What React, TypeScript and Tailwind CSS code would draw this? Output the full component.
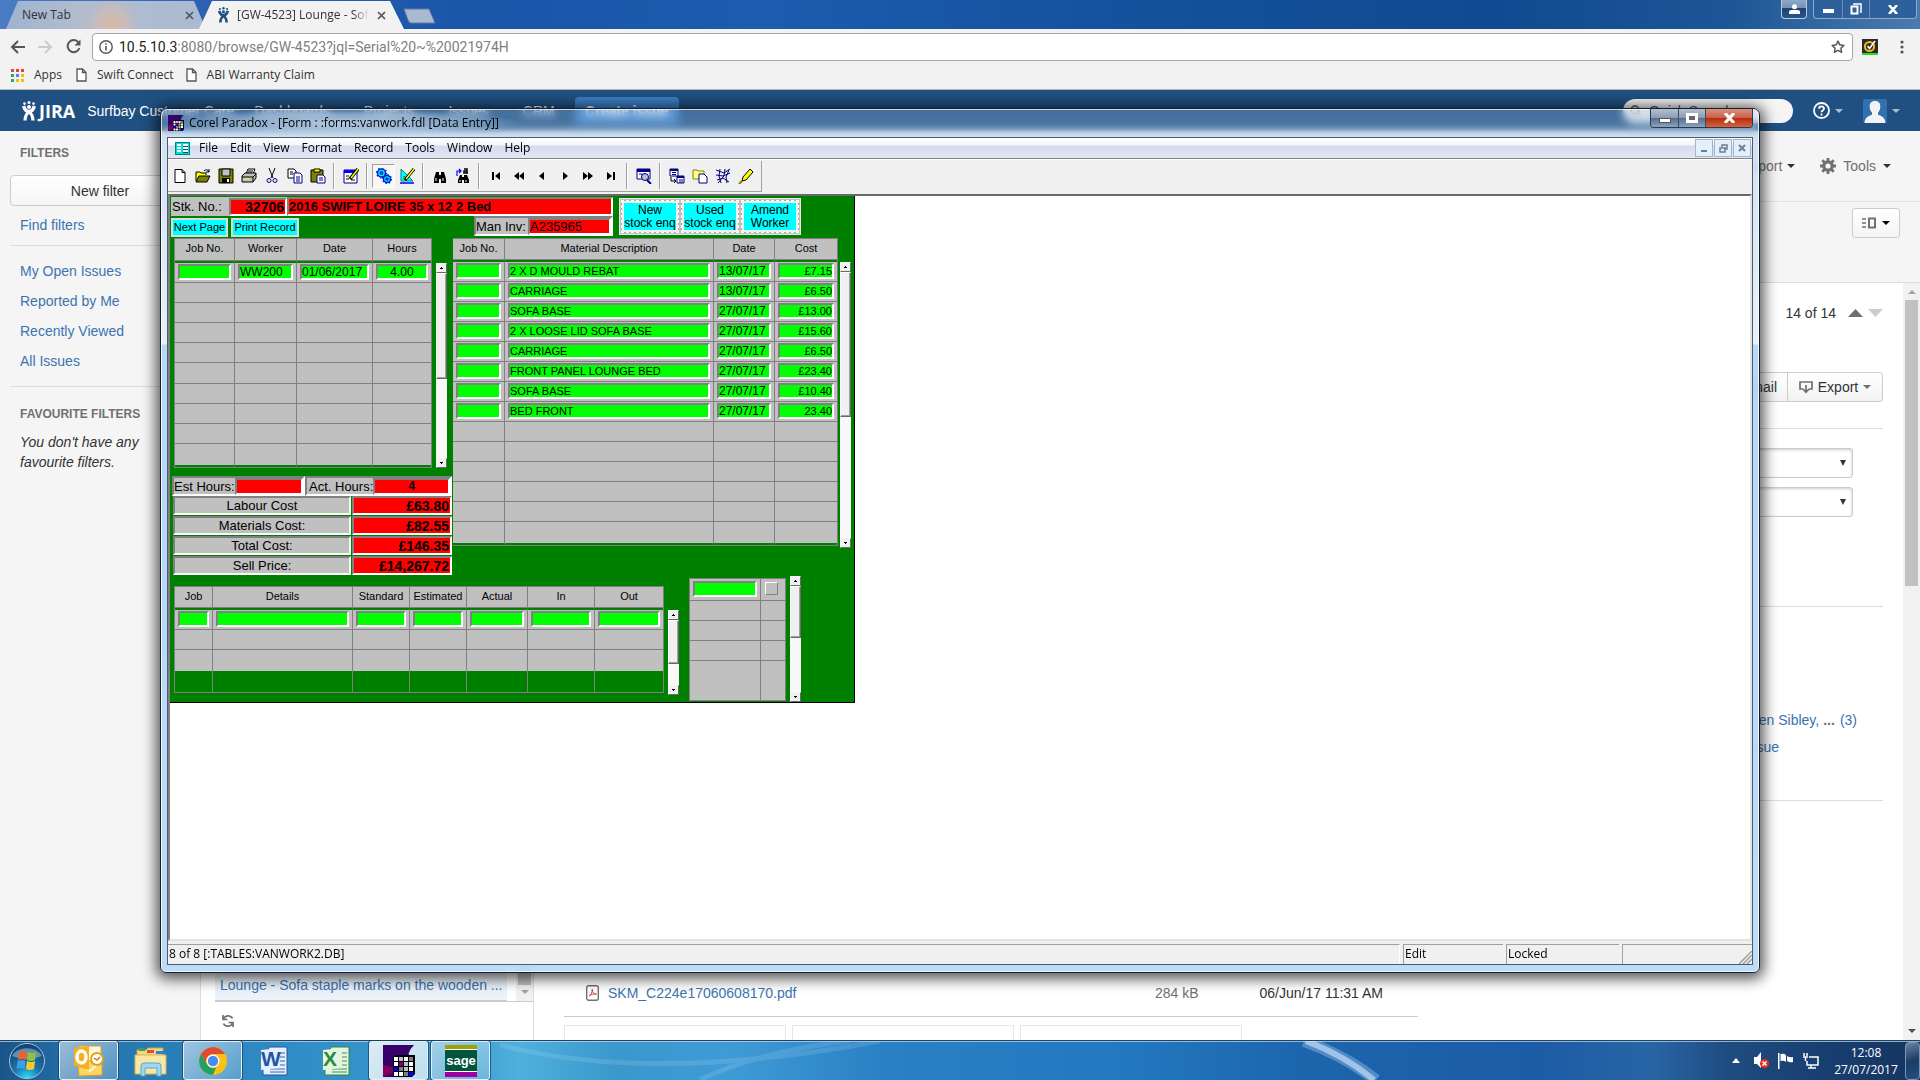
import React from "react";
import { FiStar } from "react-icons/fi";

const SUNK = "border-2 border-t-[#808080] border-l-[#808080] border-r-white border-b-white";
const FIELD =
  "block h-4 w-full min-w-0 rounded-none border-2 border-t-[#808080] border-l-[#808080] border-r-white border-b-white bg-[#00ff00] p-0 text-black outline-none";

function Caret({ className = "text-black" }: { className?: string }) {
  return (
    <svg width="8" height="4" viewBox="0 0 8 4" className={className}>
      <path d="M0 0h8L4 4z" fill="currentColor" />
    </svg>
  );
}

/* ---------- Chrome ---------- */

function JiraMark({ className }: { className: string }) {
  return (
    <svg viewBox="0 0 14 20" className={className} fill="currentColor">
      <circle cx="2.5" cy="2.6" r="1.3" />
      <circle cx="7" cy="1.6" r="1.5" />
      <circle cx="11.5" cy="2.6" r="1.3" />
      <path d="M0 5.4l3.3-.9c.8 3 2 4.200 3.700 4.200s2.900-1.200 3.700-4.200l3.300.9c-.8 3-2.200 5-4.200 6.200 1.600 1.800 2.600 4.400 2.800 7.900H9.300c0-3.200-.8-5.200-2.300-6.500-1.500 1.300-2.300 3.300-2.300 6.500H1.400c.2-3.500 1.200-6.100 2.800-7.900C2.200 10.400.8 8.400 0 5.400z" />
      <circle cx="7" cy="6" r="2" />
    </svg>
  );
}

function CloseX() {
  return (
    <svg width="9" height="9" viewBox="0 0 9 9" stroke="#555" strokeWidth="1.700">
      <path d="M1 1l7 7M8 1L1 8" />
    </svg>
  );
}

function PageIcon() {
  return (
    <svg width="11" height="14" viewBox="0 0 11 14" fill="#fff" stroke="#555" strokeWidth="1.300">
      <path d="M1 1h5.500L10 4.500V13H1z" />
      <path d="M6.500 1v3.500H10" fill="none" />
    </svg>
  );
}

function TabStrip() {
  return (
    <div className="flex h-[29px] shrink-0 items-end bg-[linear-gradient(90deg,#4a7cc4_0,#2f62b0_10%,#1a55a8_25%,#1c5cae_40%,#14509c_60%,#104a90_78%,#1c5696_90%,#4a7bae_100%)]">
      <div className="ml-[6px] flex h-7 w-[200px] items-center justify-between bg-[radial-gradient(circle_at_106px_24px,#d9b9a4_0,#c9bcbb_14px,transparent_26px),linear-gradient(90deg,#9fb4d0,#b3bccd_40%,#a9bad3)] pr-3 pl-4 text-xs text-[#333] [clip-path:polygon(0_100%,12px_0,188px_0,100%_100%)]">
        <span>New Tab</span>
        <button aria-label="Close New Tab"><CloseX /></button>
      </div>
      <div className="-ml-[7px] flex h-7 w-[205px] items-center bg-[#f2f2f2] pr-[18px] pl-[18px] text-xs text-[#333] [clip-path:polygon(0_100%,13px_0,191px_0,100%_100%)]">
        <JiraMark className="h-4 w-[13px] shrink-0 text-[#205081]" />
        <span className="ml-[7px] min-w-0 flex-1 overflow-hidden whitespace-nowrap [mask-image:linear-gradient(90deg,#000_88%,transparent)]">
          [GW-4523] Lounge - Sofa
        </span>
        <button aria-label="Close tab" className="ml-2"><CloseX /></button>
      </div>
      <button aria-label="New tab" className="mb-[5px] -ml-px">
        <svg width="33" height="16" viewBox="0 0 33 16">
          <path d="M1 1h25l6 14H8q-2 0-3-3z" fill="#a9b9d0" stroke="#5d7ba6" />
        </svg>
      </button>
      <div className="mr-[3px] ml-auto flex gap-[6px] self-start">
        <button aria-label="Profile" className="flex h-[19px] w-[26px] items-center justify-center rounded-b border border-t-0 border-[#b9cbe0] bg-[linear-gradient(#8fa9c8_0,#7591b4_45%,#1c4474_46%,#2c5587)]">
          <svg width="11" height="10" viewBox="0 0 11 10" fill="#fff"><circle cx="5.500" cy="2.700" r="2.500" /><path d="M0 10V8q0-2 3-2h5q3 0 3 2v2z" /></svg>
        </button>
        <div className="flex h-[19px] overflow-hidden rounded-b border border-t-0 border-[#8fa9c8] bg-[#2e609b] text-white">
          <button aria-label="Minimize" className="flex w-[29px] items-center justify-center border-r border-[#6d8fb8]"><span className="mt-1 h-1 w-[11px] bg-white" /></button>
          <button aria-label="Restore" className="flex w-[27px] items-center justify-center border-r border-[#6d8fb8]">
            <svg width="12" height="12" viewBox="0 0 12 12" fill="none" stroke="#fff" strokeWidth="2"><path d="M4 2V1h7v8h-1" strokeWidth="1.500" /><path d="M1.500 3.500h6v7h-6z" /></svg>
          </button>
          <button aria-label="Close" className="flex w-[46px] items-center justify-center">
            <svg width="10" height="9" viewBox="0 0 10 9" stroke="#fff" strokeWidth="2.600"><path d="M1 0l8 9M9 0L1 9" /></svg>
          </button>
        </div>
      </div>
    </div>
  );
}

function AddressRow() {
  return (
    <div className="flex h-[35px] shrink-0 items-center bg-[#f2f2f2] pr-[16px] pl-[10px]">
      <button aria-label="Back" className="w-[16px] text-[#555]">
        <svg width="15" height="14" viewBox="0 0 15 14" fill="none" stroke="currentColor" strokeWidth="2"><path d="M15 7H2M8 1L2 7l6 6" /></svg>
      </button>
      <button aria-label="Forward" className="ml-3 w-[16px] text-[#ccc]">
        <svg width="15" height="14" viewBox="0 0 15 14" fill="none" stroke="currentColor" strokeWidth="2"><path d="M0 7h13M7 1l6 6-6 6" /></svg>
      </button>
      <button aria-label="Reload" className="ml-3 w-[16px] text-[#555]">
        <svg width="15" height="15" viewBox="0 0 15 15" fill="none" stroke="currentColor" strokeWidth="2"><path d="M12.500 3.500A6 6 0 1 0 13.400 9" /><path d="M14.500.5v6h-6z" fill="currentColor" stroke="none" /></svg>
      </button>
      <div className="ml-[10px] flex h-7 flex-1 items-center rounded-sm border border-[#a6a6a6] bg-white pr-[7px] pl-[6px]">
        <svg width="14" height="14" viewBox="0 0 14 14" fill="none" stroke="#555" strokeWidth="1.400"><circle cx="7" cy="7" r="6.200" /><path d="M7 6v4.500M7 3.200v1.600" strokeWidth="1.600" /></svg>
        <span className="ml-[6px] flex-1 font-[Roboto,sans-serif] text-sm leading-none whitespace-nowrap text-[#808080]">
          <span className="text-[#222]">10.5.10.3</span>:8080/browse/GW-4523?jql=Serial%20~%20021974H
        </span>
        <button aria-label="Bookmark this page"><FiStar size={14} color="#555" strokeWidth={2.500} /></button>
      </div>
      <svg className="ml-[9px]" width="16" height="16" viewBox="0 0 16 16"><path fill="#2b2b2b" d="M0 0h16v16H0z" /><path fill="#2bdc12" d="M0 14h16v2H0z" /><circle cx="7.500" cy="7.500" r="4.600" fill="none" stroke="#f4b81c" strokeWidth="2" /><path d="M5.500 7l2 2.500L13 2" fill="none" stroke="#fff" strokeWidth="1.600" /></svg>
      <button aria-label="Menu" className="ml-[22px]">
        <svg width="4" height="14" viewBox="0 0 4 14" fill="#555"><circle cx="2" cy="2" r="1.600" /><circle cx="2" cy="7" r="1.600" /><circle cx="2" cy="12" r="1.600" /></svg>
      </button>
    </div>
  );
}

const APP_DOTS = ["#ea4335", "#ea4335", "#ea4335", "#34a853", "#4285f4", "#fbbc05", "#34a853", "#fbbc05", "#fbbc05"];

function BookmarksBar() {
  return (
    <div className="flex h-[26px] shrink-0 items-center border-b border-[#b5b5b5] bg-[#f2f2f2] pb-[3px] pl-[11px] text-xs text-[#333]">
      <a href="#apps" className="flex items-center gap-[10px]">
        <span className="grid grid-cols-3 gap-[2px]">
          {APP_DOTS.map((c, i) => <i key={i} className="h-[3px] w-[3px]" style={{ background: c }} />)}
        </span>
        Apps
      </a>
      <a href="#swift" className="ml-[14px] flex items-center gap-[10px]"><PageIcon />Swift Connect</a>
      <a href="#abi" className="ml-[12px] flex items-center gap-[10px]"><PageIcon />ABI Warranty Claim</a>
    </div>
  );
}

/* ---------- JIRA ---------- */

function JiraHeader() {
  return (
    <header className="flex h-[41px] shrink-0 items-center bg-[#205081] pr-5 pl-[22px] font-[Liberation_Sans,sans-serif] text-sm text-white">
      <a href="#jira" className="flex items-center gap-[3px]">
        <JiraMark className="h-5 w-[14px]" />
        <span className="font-[Open_Sans,sans-serif] text-lg leading-none font-bold">JIRA</span>
      </a>
      <a href="#home" className="ml-3 whitespace-nowrap">Surfbay Customer Care</a>
      <nav className="ml-[20px] flex items-center gap-[34px]">
        <a href="#dash">Dashboards</a>
        <a href="#projects">Projects</a>
        <a href="#issues">Issues</a>
        <a href="#crm">CRM</a>
      </nav>
      <button className="ml-[20px] h-7 w-[104px] rounded-sm bg-[#3b7fc4] font-bold whitespace-nowrap">Create issue</button>
      <div className="ml-auto flex h-6 w-[170px] items-center rounded-full bg-[#f5f5f5] pl-[7px] text-[#555]">
        <svg width="12" height="12" viewBox="0 0 12 12" fill="none" stroke="#555" strokeWidth="1.500"><circle cx="5" cy="5" r="4" /><path d="M8 8l4 4" /></svg>
        <input aria-label="Quick Search" placeholder="Quick Search" className="ml-[7px] w-[120px] bg-transparent placeholder:text-[#555]" />
      </div>
      <button aria-label="Help" className="ml-5 flex items-center gap-[5px]">
        <svg width="17" height="17" viewBox="0 0 17 17"><circle cx="8.500" cy="8.500" r="7.500" fill="none" stroke="#fff" strokeWidth="1.800" /><path d="M6 6.800C6 3.600 11 3.700 11 6.600c0 1.900-2.500 1.800-2.500 3.700M8.500 11.600v1.800" fill="none" stroke="#fff" strokeWidth="1.800" /></svg>
        <Caret className="text-[#a9bdd3]" />
      </button>
      <button aria-label="User profile" className="ml-5 flex items-center gap-[5px]">
        <svg width="24" height="24" viewBox="0 0 24 24"><rect width="24" height="24" rx="2" fill="#3270b0" /><path d="M12 2c4 0 5.500 2.500 5.300 6-.2 3-1.300 4.500-2.300 5.500v2c2 1.500 7 1.500 7.500 8.500h-21C2 17 7 17 9 15.500v-2C8 12.500 6.900 11 6.700 8 6.500 4.500 8 2 12 2z" fill="#f3f3f3" /></svg>
        <Caret className="text-[#a9bdd3]" />
      </button>
    </header>
  );
}

function Sidebar() {
  return (
    <aside className="w-[200px] shrink-0 bg-[#f5f5f5] px-[10px] text-sm leading-5 text-[#3b73af]">
      <h2 className="mt-[12px] pl-[10px] text-xs leading-5 font-bold text-[#707070]">FILTERS</h2>
      <button className="mt-[12px] h-[31px] w-full rounded-sm border border-[#ccc] bg-[linear-gradient(#fff,#f5f5f5)] text-[#333]">New filter</button>
      <a href="#find" className="mt-[9px] ml-[10px] block">Find filters</a>
      <hr className="mt-[10px] border-[#ddd]" />
      <ul className="mt-[15px] ml-[10px] flex flex-col gap-[10px]">
        {["My Open Issues", "Reported by Me", "Recently Viewed", "All Issues"].map((t) => (
          <li key={t}><a href="#list">{t}</a></li>
        ))}
      </ul>
      <hr className="mt-[15px] border-[#ddd]" />
      <h2 className="mt-[17px] pl-[10px] text-xs leading-5 font-bold text-[#707070]">FAVOURITE FILTERS</h2>
      <p className="mt-[8px] w-[150px] pl-[10px] text-[#333] italic">You don't have any favourite filters.</p>
    </aside>
  );
}

function IssueList() {
  return (
    <section className="flex w-[334px] shrink-0 flex-col justify-end border-x border-[#ddd] pl-[14px]">
      <div className="flex items-end border-b border-[#ccc]">
        <a href="#issue" className="mr-[9px] h-12 flex-1 border-b border-[#ccc] bg-[#ebf2f9] pt-[22px] pl-[5px] text-sm leading-5 whitespace-nowrap text-[#3b73af]">
          Lounge - Sofa staple marks on the wooden ...
        </a>
        <div className="flex h-12 w-[17px] flex-col items-center bg-[#f1f1f1]">
          <div className="h-[32px] w-[13px] bg-[#c1c1c1]" />
          <Caret className="mt-[5px] text-[#a3a3a3]" />
        </div>
      </div>
      <button aria-label="Refresh" className="mt-[12px] mb-[12px] ml-[7px] w-3 text-[#707070]">
        <svg width="12" height="14" viewBox="0 0 12 14" fill="none" stroke="currentColor" strokeWidth="1.700"><path d="M1 1v4.500h4.500M1.500 5Q3 1.500 6.500 1.800 9.500 2 10.500 4.500M11 13V8.500H6.500M10.500 9Q9 12.500 5.500 12.200 2.500 12 1.500 9.500" /></svg>
      </button>
    </section>
  );
}

function Detail() {
  const select = "mt-[9px] flex h-[30px] w-[400px] appearance-none rounded-[3px] border border-[#ccc] bg-white shadow-[inset_0_1px_3px_#ccc]";
  return (
    <section className="flex min-w-0 flex-1 flex-col justify-between pl-[30px] text-sm leading-5 text-[#333]">
      <div className="flex flex-col items-end pr-5">
        <div className="flex h-[60px] items-center">
          14 of 14
          <svg className="ml-3" width="15" height="8" viewBox="0 0 15 8"><path d="M0 8h15L7.500 0z" fill="#707070" /></svg>
          <svg className="ml-[5px]" width="15" height="8" viewBox="0 0 15 8"><path d="M0 0h15L7.500 8z" fill="#ccc" /></svg>
        </div>
        <div className="mt-[29px] flex h-[30px] rounded-[3px] border border-[#ccc] bg-[linear-gradient(#fff,#f2f2f2)]">
          <button className="px-[10px]">Email</button>
          <button className="flex w-[95px] items-center justify-center gap-[5px] border-l border-[#ccc]">
            <svg width="14" height="14" viewBox="0 0 14 14" fill="none" stroke="#707070" strokeWidth="1.700"><path d="M4 9H1V2h12v7h-3M7 5v7M4 9l3 3.300L10 9" /></svg>
            Export
            <Caret className="text-[#707070]" />
          </button>
        </div>
        <hr className="mt-[26px] mb-[10px] w-full border-[#ddd]" />
        {["Transition", "Field"].map((label) => (
          <div key={label} className="relative mr-[30px]">
            <select aria-label={label} className={select} />
            <svg className="pointer-events-none absolute top-[21px] right-[7px]" width="6" height="6" viewBox="0 0 6 6"><path d="M0 0h6L3 6z" fill="#333" /></svg>
          </div>
        ))}
        <hr className="mt-[89px] w-full border-[#ddd]" />
        <div className="mt-[103px] mr-[26px] flex gap-1 text-[#3b73af]">
          <a href="#sibley">en Sibley,</a><b className="mr-px text-[#707070]">...</b><a href="#more">(3)</a>
        </div>
        <a href="#watch" className="mt-[7px] mr-[104px] text-[#3b73af]">issue</a>
        <hr className="mt-[43px] w-full border-[#ddd]" />
      </div>
      <div className="mr-[485px]">
        <div className="flex items-center border-b border-[#ccc] pr-[35px] pb-[13px] pl-[22px]">
          <svg width="13" height="16" viewBox="0 0 13 16"><rect x=".7" y=".7" width="11.600" height="14.600" rx="2" fill="#fff" stroke="#707070" strokeWidth="1.400" /><path d="M3 11c2-1 3.500-4 3.300-7C6 7 8 9.500 10.500 9 8 8.500 5 9.500 3 11z" fill="none" stroke="#d04437" /></svg>
          <a href="#pdf" className="ml-[9px] text-[#3b73af]">SKM_C224e17060608170.pdf</a>
          <span className="ml-auto text-[#707070]">284 kB</span>
          <time className="ml-[61px]">06/Jun/17 11:31 AM</time>
        </div>
        <div className="mt-2 mr-[176px] grid grid-cols-3 gap-[6px]">
          {[0, 1, 2].map((n) => <div key={n} className="h-[15px] border border-b-0 border-[#e8e8e8]" />)}
        </div>
      </div>
    </section>
  );
}

function JiraBody() {
  return (
    <div className="flex min-h-0 flex-1 font-[Liberation_Sans,sans-serif]">
      <Sidebar />
      <main className="flex min-w-0 flex-1 flex-col bg-[#f5f5f5]">
        <div className="flex h-[71px] shrink-0 items-center justify-end border-b border-[#e0e0e0] pr-[29px] text-sm text-[#707070]">
          <button className="flex items-center gap-[5px]">Export<Caret className="text-[#333]" /></button>
          <button className="ml-[25px] flex items-center gap-[7px]">
            <svg width="16" height="16" viewBox="0 0 16 16" stroke="#707070" fill="none"><circle cx="8" cy="8" r="4.200" strokeWidth="3.200" /><path d="M8 0v3M8 13v3M0 8h3M13 8h3M2.300 2.300l2.200 2.200M11.500 11.500l2.200 2.200M13.700 2.300l-2.200 2.200M4.500 11.500l-2.200 2.200" strokeWidth="2.800" /></svg>
            Tools<Caret className="text-[#333]" />
          </button>
        </div>
        <div className="flex h-[81px] shrink-0 items-start justify-end border-b border-[#ddd] pt-[6px] pr-5">
          <button aria-label="Layout" className="flex h-[30px] w-12 items-center justify-center gap-[6px] rounded-[3px] border border-[#ccc] bg-[linear-gradient(#fff,#f4f4f4)]">
            <svg width="14" height="12" viewBox="0 0 14 12" fill="none" stroke="#707070" strokeWidth="2"><path d="M0 2h4M0 6h4M0 10h4" strokeWidth="1.500" /><path d="M7 1.500h6v9H7z" /></svg>
            <Caret />
          </button>
        </div>
        <div className="flex min-h-0 flex-1 bg-white">
          <IssueList />
          <Detail />
          <div className="flex w-[17px] shrink-0 flex-col items-center bg-[#f1f1f1] pt-[7px] pb-[7px]">
            <svg width="8" height="4" viewBox="0 0 8 4"><path d="M0 4h8L4 0z" fill="#a3a3a3" /></svg>
            <div className="mt-[6px] h-[286px] w-[13px] bg-[#c1c1c1]" />
            <Caret className="mt-auto text-[#505050]" />
          </div>
        </div>
      </main>
    </div>
  );
}

/* ---------- Paradox form ---------- */

function FormScroll({ box, thumb }: { box: string; thumb: string }) {
  const btn = "flex h-[10px] w-full shrink-0 items-center justify-center border border-t-[#f5f5f5] border-l-[#f5f5f5] border-r-[#696969] border-b-[#696969] bg-[#f0f0f0]";
  return (
    <div className={"flex w-[11px] shrink-0 flex-col bg-[#f8f8f8] " + box}>
      <button aria-label="Scroll up" className={btn}><svg width="3" height="2" viewBox="0 0 3 2"><path d="M1 0h1v1h1v1H0V1h1z" /></svg></button>
      <div className={"w-full border border-t-white border-l-white border-r-[#696969] border-b-[#696969] bg-[#f0f0f0] shadow-[inset_-1px_-1px_#a0a0a0] " + thumb} />
      <button aria-label="Scroll down" className={btn + " mt-auto"}><svg width="3" height="2" viewBox="0 0 3 2"><path d="M0 0h3v1H2v1H1V1H0z" /></svg></button>
    </div>
  );
}

const TD = "border-b border-r border-[#808080] last:border-r-0";
const TABLE = "table-fixed border-separate border-spacing-0 border-[#808080] text-[11px] leading-none";

function Cols({ widths }: { widths: number[] }) {
  return <colgroup>{widths.map((w, i) => <col key={i} style={{ width: w }} />)}</colgroup>;
}

function Head({ labels, height }: { labels: string[]; height: string }) {
  return (
    <thead>
      <tr className={height}>
        {labels.map((l, i) => <th key={i} scope="col" className={TD + " bg-[#c0c0c0] px-0 pt-0 pb-[2px] align-middle font-normal"}>{l}</th>)}
      </tr>
    </thead>
  );
}

const CELL = TD + " bg-[#c0c0c0] px-[3px] pt-px pb-0 align-top";

function LabourTable() {
  const row = ["", "WW200", "01/06/2017", "4.00"];
  const names = ["Job No.", "Worker", "Date", "Hours"];
  return (
    <table className={TABLE + " w-[258px] border"}>
      <Cols widths={[60, 62, 76, 58]} />
      <Head labels={names} height="h-[22px]" />
      <tbody>
        <tr className="h-[22px]">
          {row.map((v, i) => (
            <td key={i} className={CELL + " border-t-2 border-t-[#008000]"}>
              <input aria-label={names[i]} defaultValue={v} className={FIELD + (i === 3 ? " text-center text-xs" : " text-xs")} />
            </td>
          ))}
        </tr>
        {[1, 2, 3, 4, 5, 6, 7, 8].map((r) => (
          <tr key={r} className="h-5">{row.map((_, i) => <td key={i} className={TD + " bg-[#c0c0c0] p-0"} />)}</tr>
        ))}
        <tr className="h-[23px]">{row.map((_, i) => <td key={i} className={TD + " border-b-2 border-b-[#008000] bg-[#c0c0c0] p-0"} />)}</tr>
      </tbody>
    </table>
  );
}

const MATERIALS = [
  ["", "2 X D MOULD REBAT", "13/07/17", "£7.15"],
  ["", "CARRIAGE", "13/07/17", "£6.50"],
  ["", "SOFA BASE", "27/07/17", "£13.00"],
  ["", "2 X LOOSE LID SOFA BASE", "27/07/17", "£15.60"],
  ["", "CARRIAGE", "27/07/17", "£6.50"],
  ["", "FRONT PANEL LOUNGE BED", "27/07/17", "£23.40"],
  ["", "SOFA BASE", "27/07/17", "£10.40"],
  ["", "BED FRONT", "27/07/17", "23.40"],
];
const MATERIAL_HEAD = ["Job No.", "Material Description", "Date", "Cost"];

function MaterialsTable() {
  return (
    <table className={TABLE + " w-[385px] border border-l-0"}>
      <Cols widths={[52, 209, 61, 62]} />
      <Head labels={MATERIAL_HEAD} height="h-[21px]" />
      <tbody>
        {MATERIALS.map((row, r) => (
          <tr key={r} className={r === 0 ? "h-[22px]" : "h-5"}>
            {row.map((v, i) => (
              <td key={i} className={CELL + (r === 0 ? " border-t-2 border-t-[#008000]" : "")}>
                <input aria-label={MATERIAL_HEAD[i]} defaultValue={v} className={FIELD + (i === 3 ? " text-right" : i === 2 ? " text-xs" : "")} />
              </td>
            ))}
          </tr>
        ))}
        {[1, 2, 3, 4, 5].map((r) => (
          <tr key={r} className="h-5">{MATERIAL_HEAD.map((_, i) => <td key={i} className={TD + " bg-[#c0c0c0] p-0"} />)}</tr>
        ))}
        <tr className="h-[23px]">{MATERIAL_HEAD.map((_, i) => <td key={i} className={TD + " border-b-2 border-b-[#008000] bg-[#c0c0c0] p-0"} />)}</tr>
      </tbody>
    </table>
  );
}

const JOB_HEAD = ["Job", "Details", "Standard", "Estimated", "Actual", "In", "Out"];

function JobsTable() {
  return (
    <table className={TABLE + " w-[490px] border"}>
      <Cols widths={[38, 140, 57, 57, 61, 67, 68]} />
      <Head labels={JOB_HEAD} height="h-[21px]" />
      <tbody>
        <tr className="h-[22px]">
          {JOB_HEAD.map((n) => (
            <td key={n} className={CELL + " border-t-2 border-t-[#008000]"}><input aria-label={n} className={FIELD} /></td>
          ))}
        </tr>
        <tr className="h-5">{JOB_HEAD.map((n) => <td key={n} className={TD + " bg-[#c0c0c0] p-0"} />)}</tr>
        <tr className="h-[21px]">{JOB_HEAD.map((n) => <td key={n} className={TD + " border-b-0 bg-[#c0c0c0] p-0"} />)}</tr>
        <tr className="h-[21px]">{JOB_HEAD.map((n) => <td key={n} className={TD + " border-b-0 p-0"} />)}</tr>
      </tbody>
    </table>
  );
}

function FlagTable() {
  return (
    <table className={TABLE + " w-[97px] border bg-[#c0c0c0]"}>
      <Cols widths={[71, 24]} />
      <tbody>
        <tr className="h-[22px]">
          <td className={TD + " px-[3px] pt-[2px] pb-0 align-top"}><input aria-label="Entry" className={FIELD} /></td>
          <td className={TD + " p-0 pt-[3px] align-top"}><input type="checkbox" aria-label="Flag" className="ml-1 block h-[13px] w-[13px] appearance-none border border-t-white border-l-white border-r-[#808080] border-b-[#808080] bg-[#c0c0c0]" /></td>
        </tr>
        {[1, 2, 3].map((r) => <tr key={r} className="h-5"><td className={TD + " p-0"} /><td className={TD + " p-0"} /></tr>)}
        <tr className="h-[39px]"><td className={TD + " border-b-0 p-0"} /><td className={TD + " border-b-0 p-0"} /></tr>
      </tbody>
    </table>
  );
}

const COSTS = [
  ["Labour Cost", "£63.80"],
  ["Materials Cost:", "£82.55"],
  ["Total Cost:", "£146.35"],
  ["Sell Price:", "£14,267.72"],
];

const CYAN = "border-2 border-[#dcdcdc] bg-[#00ffff] text-[11px] text-black";

function VanForm() {
  return (
    <div className="w-[685px] border-r border-b border-black border-b-black bg-[#008000] font-[Liberation_Sans,sans-serif] text-[13px] leading-none text-black">
      <div className="flex h-[42px] gap-[6px] pt-px pl-px">
        <div className="w-[442px]">
          <div className="flex">
            <label className="flex h-[19px] w-[116px] items-center bg-[#c0c0c0] pl-px">
              <span className="w-[57px]">Stk. No.:</span>
              <input defaultValue="32706" className={"h-[18px] w-[58px] bg-[#ff0000] pr-px text-right text-sm leading-none font-bold " + SUNK} />
            </label>
            <input aria-label="Description" defaultValue="2016 SWIFT LOIRE 35 x 12 2 Bed" className={"h-[19px] min-w-0 flex-1 bg-[#ff0000] text-[13px] font-bold " + SUNK} />
          </div>
          <div className="flex">
            <button className={"mt-[2px] h-[19px] w-[57px] whitespace-nowrap " + CYAN}>Next Page</button>
            <button className={"mt-[2px] ml-[3px] h-[19px] w-[68px] whitespace-nowrap " + CYAN}>Print Record</button>
            <label className={"ml-auto flex h-5 w-[139px] items-center bg-[#c0c0c0] " + SUNK}>
              <span className="w-[52px] whitespace-nowrap">Man Inv:</span>
              <input defaultValue="A235965" className={"h-[17px] min-w-0 flex-1 bg-[#ff0000] text-[13px] " + SUNK} />
            </label>
          </div>
        </div>
        <div className="mt-px flex h-[37px] w-[182px] gap-[2px] border border-[#e8e8e8] bg-[#c0c0c0] p-px">
          {[["New", "stock enq"], ["Used", "stock enq"], ["Amend", "Worker"]].map(([a, b]) => (
            <div key={a} className="flex flex-1 border border-dashed border-white bg-[#a8a8a8] p-px">
              <button className="flex-1 border border-[#f0f0f0] bg-[#00ffff] text-xs leading-[13px] whitespace-nowrap outline-1 outline-[#f0f0f0]">{a}<br />{b}</button>
            </div>
          ))}
        </div>
      </div>
      <div className="flex h-[338px] items-start pl-[2px]">
        <div className="w-[281px] shrink-0">
          <div className="flex gap-1 pl-[2px]">
            <LabourTable />
            <FormScroll box="mt-[25px] h-[205px]" thumb="h-[106px]" />
          </div>
          <div className="mt-2 flex h-[20px]">
            <label className={"flex w-[133px] items-center bg-[#c0c0c0] " + SUNK}>
              <span className="flex-1 whitespace-nowrap">Est Hours:</span>
              <input className={"h-[17px] w-[68px] bg-[#ff0000] " + SUNK} />
            </label>
            <label className={"flex w-[147px] items-center bg-[#c0c0c0] pl-[2px] " + SUNK}>
              <span className="flex-1 whitespace-nowrap">Act. Hours:</span>
              <input defaultValue="4" className={"h-[17px] w-[77px] bg-[#ff0000] text-center text-xs font-bold " + SUNK} />
            </label>
          </div>
          <div className="flex flex-col gap-px pl-px">
            {COSTS.map(([l, v]) => (
              <label key={l} className="flex gap-px">
                <span className={"flex h-[19px] w-[178px] items-center justify-center bg-[#c0c0c0] " + SUNK}>{l}</span>
                <input defaultValue={v} className={"h-[19px] w-[100px] bg-[#ff0000] pr-px text-right text-sm leading-none font-bold " + SUNK} />
              </label>
            ))}
          </div>
        </div>
        <MaterialsTable />
        <FormScroll box="mt-6 ml-[2px] h-[286px]" thumb="h-[145px]" />
      </div>
      <div className="flex h-[126px] items-start pl-1">
        <div className="mt-[10px]"><JobsTable /></div>
        <FormScroll box="mt-[34px] ml-1 h-[85px]" thumb="h-[44px]" />
        <div className="mt-[2px] ml-[10px]"><FlagTable /></div>
        <FormScroll box="ml-1 h-[126px]" thumb="h-[52px]" />
      </div>
    </div>
  );
}

/* ---------- Paradox toolbar ---------- */

const I: Record<string, React.ReactNode> = {
  new: <path d="M3 1.500h7l3 3v10H3zM10 1.500v3h3" fill="#fff" stroke="#000" />,
  open: <g stroke="#000"><path d="M1 13V4h4l1 1h5v2" fill="#ff0" /><path d="M1 14l3-6h11l-3 6z" fill="#808000" /><path d="M9 3q3-3 5 1M14 1v3h-3" fill="none" /></g>,
  save: <g><path d="M1 1h14v14H1z" fill="#808000" stroke="#000" /><path d="M4 1h8v7H4z" fill="#c0c0c0" stroke="#000" /><path d="M4 10h8v5H4z" fill="#000" /><path d="M9 11h2v3H9z" fill="#fff" /></g>,
  print: <g stroke="#000"><path d="M5 6l2-5h7l-2 5" fill="#fff" /><path d="M7 3h5M6 5h5" /><path d="M1 8l3-3h11v5l-3 4H1z" fill="#c0c0c0" /><path d="M1 9h11v5M12 9l3-3" fill="none" /><path d="M3 11h5" stroke="#ff0" /></g>,
  cut: <g fill="none"><path d="M5 0l4 10M11 0L7 10" stroke="#000" /><circle cx="5" cy="12.500" r="2" stroke="#000080" /><circle cx="11" cy="12.500" r="2" stroke="#000080" /></g>,
  copy: <g fill="#fff"><path d="M1 1h6l2 2v7H1z" stroke="#000" /><path d="M3 4h3M3 6h3" stroke="#000" /><path d="M7 5h6l2 2v8H7z" stroke="#000080" /><path d="M9 9h4M9 11h4M9 13h4" stroke="#000080" /></g>,
  paste: <g><path d="M1 2h12v12H1z" fill="#808000" stroke="#000" /><path d="M4 1h6v3H4z" fill="#ff0" stroke="#000" /><path d="M7 7h6l2 2v6H7z" fill="#fff" stroke="#000080" /><path d="M9 10h4M9 12h4" stroke="#000080" /></g>,
  table: <g><path d="M1 2h13v13H1z" fill="#fff" stroke="#000080" /><path d="M1 2h13v3H1z" fill="#00f" /><path d="M3 8h3M3 11h3M8 12h4" stroke="#000" /><path d="M15 1L7 11" stroke="#000" strokeWidth="3.500" /><path d="M15 1L8 10" stroke="#ff0" strokeWidth="1.500" /></g>,
  gears: <g fill="#00ffff" stroke="#0020d0" strokeWidth="1.500"><circle cx="5.500" cy="5" r="4" /><circle cx="5.500" cy="5" r="5" strokeWidth="1.200" strokeDasharray="1.500 2.400" fill="none" /><circle cx="11" cy="11" r="3.500" /><circle cx="11" cy="11" r="4.500" strokeWidth="1.200" strokeDasharray="1.500 2" fill="none" /><circle cx="5.500" cy="5" r="1.200" fill="#fff" /><circle cx="11" cy="11" r="1" fill="#fff" /></g>,
  design: <g><path d="M2 1v12h12z" fill="#00ffff" stroke="#008080" /><path d="M5 8v3h3z" fill="#fff" stroke="#008080" /><path d="M15 1L6 12" stroke="#000" strokeWidth="3" /><path d="M15 1L7 11" stroke="#ff0" strokeWidth="1.500" /><path d="M1 15h14" stroke="#00f" strokeWidth="1.500" /></g>,
  find: <g fill="#000"><path d="M4 4h3v3h2V4h3l2 7v4H9v-4H7v4H2v-4z" /><path d="M4 10v3M11 10v3" stroke="#fff" /></g>,
  replace: <g fill="#000"><path d="M5 7h2v2h2V7h3l2 5v3H9v-3H7v3H3v-3z" /><path d="M5 12v2M11 12v2" stroke="#fff" /><path d="M2 8V3h4M4 1l2 2-2 2" fill="none" stroke="#00f" strokeWidth="1.200" /><path d="M9 1h3v4H9V3h3M12 5h1" fill="none" stroke="#000" strokeWidth="1.500" /></g>,
  first: <path d="M4 4h2v8H4zM12 4v8L7 8z" />,
  prevset: <path d="M8 4v8L3 8zM13 4v8L8 8z" />,
  prev: <path d="M10 4v8L5 8z" />,
  next: <path d="M6 4v8l5-4z" />,
  nextset: <path d="M3 4v8l5-4zM8 4v8l5-4z" />,
  last: <path d="M4 4v8l5-4zM10 4h2v8h-2z" />,
  locate: <g><path d="M1 1h13v10H1z" fill="#fff" stroke="#000080" /><path d="M1 1h13v3H1z" fill="#000080" /><path d="M3 6h3v4M8 5v5h3V7H8" stroke="#00f" fill="none" /><circle cx="9" cy="9" r="3.500" fill="#c0c0c0" stroke="#000080" /><path d="M11 12l4 4" stroke="#000080" strokeWidth="2" /></g>,
  model: <g fill="#fff" stroke="#000080"><path d="M1 1h8v7H1zM8 8h7v7H8z" /><path d="M1 2h8M8 9h7" strokeWidth="2" /><path d="M3 4.500h4M3 6.500h4M10 12h4M10 14h4" /><path d="M2 9v4h5M5 11l2 2-2 2" fill="none" stroke="#000" /></g>,
  folder: <g><path d="M1 2h4l1 1h6v8H1z" fill="#ff8" stroke="#808000" /><path d="M7 6h5l3 3v6H7z" fill="#fff" stroke="#000080" /></g>,
  spider: <g stroke="#000080" fill="none"><path d="M1 2l8 3 6-4M1 7l7 1 7-3M2 12l6-2 6 4M5 1L4 8l2 7M10 1L9 8l-6 7M14 2l-3 7 1 6" /></g>,
  expert: <g stroke="#000"><path d="M12 1l3 3-7 8-4 1 1-4z" fill="#ff0" /><path d="M4 13l-3 3" stroke="#808000" strokeWidth="2" /></g>,
};

const GROUPS = [
  ["new", "open", "save", "print", "cut", "copy", "paste"],
  ["table"],
  ["gears", "design"],
  ["find", "replace"],
  ["first", "prevset", "prev", "next", "nextset", "last"],
  ["locate"],
  ["model", "folder", "spider", "expert"],
];

function Toolbar() {
  return (
    <div className="flex h-[36px] shrink-0 border-t border-[#808080] bg-[#f0f0f0] shadow-[inset_0_1px_#fff]">
      <div className="my-[2px] flex items-center border-r border-b border-[#a0a0a0] pr-[4px]">
        {GROUPS.map((g, gi) => (
          <div key={gi} className="flex items-center">
            {gi > 0 && <span className="mx-[4px] h-[26px] w-[2px] border-l border-[#a0a0a0] bg-white" />}
            {g.map((n) => (
              <button key={n} aria-label={n} className={n === "gears" ? "flex h-[24px] w-[23px] items-center justify-center border border-[#a0a0a0] border-r-white border-b-white bg-[#f7f7f7]" : "flex h-[24px] w-[23px] items-center justify-center"}>
                <svg width="16" height="16" viewBox="0 0 16 16">{I[n]}</svg>
              </button>
            ))}
          </div>
        ))}
      </div>
    </div>
  );
}

function ParadoxIcon({ size }: { size: number }) {
  const cells = ["#fff", "#c0c0c0", "#fff", "#808080", "#fff", "#800080", "#c0c0c0", "#fff", "#00f", "#808080", "#c0c0c0", "#fff", "#fff", "#fff", "#808080", "#00f"];
  return (
    <svg width={size} height={size} viewBox="0 0 32 32">
      <path d="M0 0h31q-8 8-4 14L10 32H0z" fill="#38006a" />
      <path d="M0 20l10 2v6L0 32z" fill="#800060" />
      <path d="M10 13l3-3h19v19l-3 3H10z" fill="#000" />
      {cells.map((c, i) => <rect key={i} x={11 + (i % 4) * 5} y={12 + Math.floor(i / 4) * 5} width="4" height="4" fill={c} />)}
    </svg>
  );
}

function ParadoxWindow() {
  const mdi = "flex h-[18px] w-[18px] items-center justify-center border border-[#a3b5c9] bg-[#e3effa]";
  return (
    <section className="absolute top-[108px] right-[160px] bottom-[107px] left-[160px] flex flex-col rounded-t-[7px] rounded-b-[6px] border border-[#16202c] bg-[linear-gradient(rgba(170,205,240,.25)_0,rgba(170,205,240,.3)_20px,rgba(200,222,245,.8)_29px,rgba(228,240,252,.9)_235px,rgba(176,212,248,.9)_236px,rgba(182,217,250,.9)_100%)] px-[6px] pb-[7px] shadow-[0_2px_14px_4px_rgba(0,0,0,.65),inset_0_0_0_1px_rgba(255,255,255,.75)] backdrop-blur-[4px]">
      <header className="flex h-7 shrink-0 items-start justify-between">
        <h1 className="flex h-7 items-center gap-[5px] bg-[radial-gradient(closest-side,rgba(215,228,243,.75),rgba(190,212,236,.5)_65%,transparent)] pr-5 pl-px text-xs text-black">
          <ParadoxIcon size={16} />Corel Paradox - [Form : :forms:vanwork.fdl [Data Entry]]
        </h1>
        <div className="flex h-[19px] overflow-hidden rounded-b-[4px] border border-t-0 border-[#2a3a4e]">
          <button aria-label="Minimize" className="flex w-[28px] items-center justify-center border-r border-[#3b4a5e] bg-[linear-gradient(#b4c0d0_0,#8c9db4_48%,#566c8a_50%,#8ca3bf)]"><span className="mt-1 h-[5px] w-[12px] border border-[#555] bg-white" /></button>
          <button aria-label="Maximize" className="flex w-[27px] items-center justify-center border-r border-[#3b4a5e] bg-[linear-gradient(#b4c0d0_0,#8c9db4_48%,#566c8a_50%,#8ca3bf)]"><span className="h-[10px] w-[12px] border-[3px] border-white bg-[#667]" /></button>
          <button aria-label="Close" className="flex w-[46px] items-center justify-center bg-[linear-gradient(#d9917f_0,#cb5f48_48%,#b02c12_50%,#d8623c)]">
            <svg width="11" height="10" viewBox="0 0 11 10" stroke="#fff" strokeWidth="3"><path d="M1 0l9 10M10 0L1 10" /></svg>
          </button>
        </div>
      </header>
      <div className="flex min-h-0 flex-1 flex-col border border-[#4d5b6b] bg-[#f0f0f0] text-xs text-black">
        <div className="flex h-[20px] shrink-0 items-center bg-[linear-gradient(#fff_0,#f2f5fb_35%,#d4dbed_40%,#e1e7f5)] pr-px pl-[7px]">
          <svg width="15" height="13" viewBox="0 0 15 13"><path d="M0 0h15v13H0z" fill="#00e0e0" /><path d="M.5.500h14v12H.5z" fill="none" stroke="#008080" /><path d="M2 3h4M8 3h5M2 6h4M8 6h5M2 9h4M8 9h5" stroke="#fff" strokeWidth="2" /><path d="M8 4.500h5M8 7.500h5M8 10.500h5" stroke="#055" /></svg>
          <nav className="ml-[9px] flex gap-[12px]">
            {["File", "Edit", "View", "Format", "Record", "Tools", "Window", "Help"].map((m) => <button key={m}>{m}</button>)}
          </nav>
          <div className="ml-auto flex gap-px">
            <button aria-label="Minimize form" className={mdi}><span className="mt-[6px] h-[2px] w-[6px] bg-[#6b7f95]" /></button>
            <button aria-label="Restore form" className={mdi}><svg width="9" height="9" viewBox="0 0 9 9" fill="none" stroke="#6b7f95"><path d="M3 3V1h5v4H6" strokeWidth="1.500" /><path d="M1 4h5v4H1z" strokeWidth="1.500" /></svg></button>
            <button aria-label="Close form" className={mdi}><svg width="8" height="8" viewBox="0 0 8 8" stroke="#6b7f95" strokeWidth="2"><path d="M1 1l6 6M7 1L1 7" /></svg></button>
          </div>
        </div>
        <Toolbar />
        <div className="min-h-0 flex-1 overflow-hidden border-2 border-t-[#696969] border-r-[#e3e3e3] border-b-[#e3e3e3] border-l-[#808080] bg-white">
          <VanForm />
        </div>
        <footer className="mt-[3px] flex h-[20px] shrink-0 gap-[3px] leading-[18px]">
          <div className="min-w-0 flex-1 border-t border-r border-t-[#a0a0a0] border-r-white pl-px">8 of 8 [:TABLES:VANWORK2.DB]</div>
          <div className="w-[100px] border-t border-l border-[#a0a0a0] pl-px">Edit</div>
          <div className="w-[113px] border-t border-l border-[#a0a0a0] pl-px">Locked</div>
          <div className="flex w-[130px] items-end justify-end border-t border-l border-[#a0a0a0]">
            <svg width="13" height="13" viewBox="0 0 13 13" stroke="#a0a0a0" strokeWidth="1.500"><path d="M0 13L13 0M4 13l9-9M8 13l5-5" /></svg>
          </div>
        </footer>
      </div>
    </section>
  );
}

/* ---------- Taskbar ---------- */

function OutlookIcon() {
  return (
    <svg width="32" height="32" viewBox="0 0 32 32">
      <path d="M6 1h22v18H6z" fill="#fff7d6" stroke="#e0a21c" />
      <path d="M5 17l24-2v15l-23 1z" fill="#fbd56a" stroke="#e0a21c" /><path d="M5 18l12 8 12-11" fill="none" stroke="#fff3c8" strokeWidth="2" />
      <path d="M1 3l15-2v24L1 21z" fill="#f5b021" /><ellipse cx="8.500" cy="12" rx="4.500" ry="6" fill="none" stroke="#fff" strokeWidth="3.400" />
      <circle cx="24" cy="14" r="6" fill="#fff" stroke="#e0a21c" strokeWidth="2" /><path d="M21 13l3 2 3-3" stroke="#c77c00" strokeWidth="1.500" fill="none" />
    </svg>
  );
}
function ExplorerIcon() {
  return (
    <svg width="34" height="32" viewBox="0 0 34 32">
      <path d="M3 5h9l2-2h15v24H3z" fill="#f4d683" stroke="#c9a24a" /><path d="M5 3h6v3H5z" fill="#2fa84a" /><path d="M13 5h7v3h-7z" fill="#e14b3b" /><path d="M22 6h9v3h-9z" fill="#2b82d9" />
      <path d="M1 10h31v19H1z" fill="#f8e6a4" stroke="#d5b45e" /><path d="M7 31V21q0-3 3-3h14q3 0 3 3v10h-4v-8H11v8z" fill="#9fd7f3" stroke="#57a9d4" />
    </svg>
  );
}
function ChromeIcon() {
  return (
    <svg width="30" height="30" viewBox="0 0 30 30">
      <circle cx="15" cy="15" r="14" fill="#fbc116" /><path d="M2.900 8A14 14 0 0 1 27.100 8H15a7 7 0 0 0-6 10.500z" fill="#dd4b39" />
      <path d="M2.900 8l6.100 10.500a7 7 0 0 0 9 3L15 29A14 14 0 0 1 2.900 8z" fill="#1da462" /><circle cx="15" cy="15" r="6.500" fill="#fff" /><circle cx="15" cy="15" r="5.200" fill="#4a8af4" />
    </svg>
  );
}
function OfficeIcon({ letter, color, pale }: { letter: string; color: string; pale: string }) {
  return (
    <svg width="30" height="30" viewBox="0 0 30 30">
      <path d="M9 1h18v28H3V22z" fill={pale} stroke={color} /><path d="M18 7h7M18 11h7M18 15h7M18 19h7M10 23h15M10 26h15" stroke={color} strokeWidth="1.500" opacity=".6" />
      <path d="M1 4l19-2v20L1 24z" fill={pale} /><text x="1" y="20" fontFamily="Liberation Sans, sans-serif" fontWeight="700" fontSize="21" fill={color}>{letter}</text>
    </svg>
  );
}
function StartOrb() {
  return (
    <svg width="38" height="38" viewBox="0 0 38 38">
      <defs><radialGradient id="orb" cx=".5" cy="1" r="1"><stop offset="0" stopColor="#2fe0ff" /><stop offset=".4" stopColor="#1c74ad" /><stop offset="1" stopColor="#123e68" /></radialGradient></defs>
      <circle cx="19" cy="19" r="17.500" fill="url(#orb)" stroke="#9fc6e2" /><path d="M4 14a16 12 0 0 1 30 0q-14 6-30 0z" fill="#fff" opacity=".35" />
      <path d="M11 11q4-3 8-1l-1 8q-4-2-8 0z" fill="#f0602c" /><path d="M20 10q4 2 8 0l-1 8q-4 2-8 0z" fill="#8cc63f" /><path d="M9.500 19q4-2 8 0l-1 8q-4-2-8 0z" fill="#3aa0e8" /><path d="M19 19q4 2 8 0l-1 8q-4 2-8 0z" fill="#ffc928" />
    </svg>
  );
}

function Taskbar() {
  const open = "flex w-[59px] items-center justify-center rounded-[3px] border border-[#dff0fb] bg-[linear-gradient(135deg,rgba(255,255,255,.55),rgba(255,255,255,.2))] shadow-[0_0_0_1px_rgba(20,60,100,.7)]";
  const idle = "flex w-[59px] items-center justify-center";
  return (
    <footer className="relative flex h-10 shrink-0 border-t border-[#24415f] bg-[linear-gradient(90deg,#1b5487_0,#2472ab_4%,#2f8ac4_14%,#3a9ccf_24%,#4fb0dc_27%,#3a98cc_32%,#3f9bd6_38%,#2a80c4_46%,#2379c0_58%,#1c65ad_68%,#1c5ca6_80%,#2865a5_86%,#1f4c80_90%,#183e70_95%,#153560_100%)] font-[Open_Sans,sans-serif] text-xs text-white shadow-[inset_0_1px_rgba(190,225,250,.7)]">
      <svg className="pointer-events-none absolute inset-0 h-full w-full" viewBox="0 0 1920 40" preserveAspectRatio="none" fill="none" stroke="#d3e9ff">
        <path d="M1304 0Q1345 15 1376 40" strokeWidth="12" opacity=".3" /><path d="M1306 0Q1345 15 1374 40" strokeWidth="6" opacity=".6" />
        <path d="M500 4q150 40 380-4M700 40Q760 10 850 0" strokeWidth="5" opacity=".15" />
      </svg>
      <nav className="relative flex gap-[3px] pl-2">
        <button aria-label="Start" className="mr-[10px]"><StartOrb /></button>
        <button aria-label="Outlook" className={open}><OutlookIcon /></button>
        <button aria-label="Explorer" className={idle}><ExplorerIcon /></button>
        <button aria-label="Chrome" className={open}><ChromeIcon /></button>
        <button aria-label="Word" className={idle}><OfficeIcon letter="W" color="#1f56a5" pale="#e6effb" /></button>
        <button aria-label="Excel" className={idle}><OfficeIcon letter="X" color="#2c8a3c" pale="#e4f4e0" /></button>
        <button aria-label="Paradox" className={open + " bg-white/60"}><ParadoxIcon size={32} /></button>
        <button aria-label="Sage" className={open}>
          <svg width="32" height="32" viewBox="0 0 32 32"><path d="M0 0h32v32H0z" fill="#fff" /><path d="M0 0h32v4H0z" fill="#a0a000" /><path d="M0 5h32v21H0z" fill="#00553c" /><path d="M0 27h32v5H0z" fill="#a000a0" /><text x="16" y="20" textAnchor="middle" fontFamily="Liberation Sans, sans-serif" fontWeight="700" fontSize="13" fill="#fff">sage</text></svg>
        </button>
      </nav>
      <div className="relative ml-auto flex items-center">
        <svg width="8" height="5" viewBox="0 0 8 5"><path d="M0 5h8L4 0z" fill="#fff" /></svg>
        <svg className="ml-[14px]" width="15" height="17" viewBox="0 0 15 17"><path d="M0 5h3l4-5v16l-4-4H0z" fill="#fff" /><circle cx="10.500" cy="11.500" r="4.500" fill="#e0301e" /><path d="M8.500 9.500l4 4M12.500 9.500l-4 4" stroke="#fff" strokeWidth="1.400" /></svg>
        <svg className="ml-[9px]" width="16" height="16" viewBox="0 0 16 16" fill="#fff"><path d="M0 0h1.500v16H0zM2.500 1Q6 0 8 2v7Q6 7 2.500 8zM9 3q3 2 6 1v5q-3 1-6-1z" /></svg>
        <svg className="ml-[9px]" width="16" height="16" viewBox="0 0 16 16" fill="none" stroke="#fff" strokeWidth="1.500"><path d="M6 4h9v8H4V8M8 12v3M5 15h8M1 0v3M4 0v3M0 4h5M2.500 4v4" /></svg>
        <div className="ml-[12px] w-[70px] text-center leading-[17px]"><time>12:08</time><br /><time>27/07/2017</time></div>
        <button aria-label="Show desktop" className="ml-[4px] h-[38px] w-[15px] rounded-sm border border-[#7c95b4] bg-[linear-gradient(160deg,#6883a5,#1b3c66_50%,#234f80)]" />
      </div>
    </footer>
  );
}

export default function App() {
  return (
    <div className="relative flex h-screen flex-col overflow-hidden bg-white font-[Open_Sans,sans-serif]">
      <TabStrip />
      <AddressRow />
      <BookmarksBar />
      <JiraHeader />
      <JiraBody />
      <Taskbar />
      <ParadoxWindow />
    </div>
  );
}
